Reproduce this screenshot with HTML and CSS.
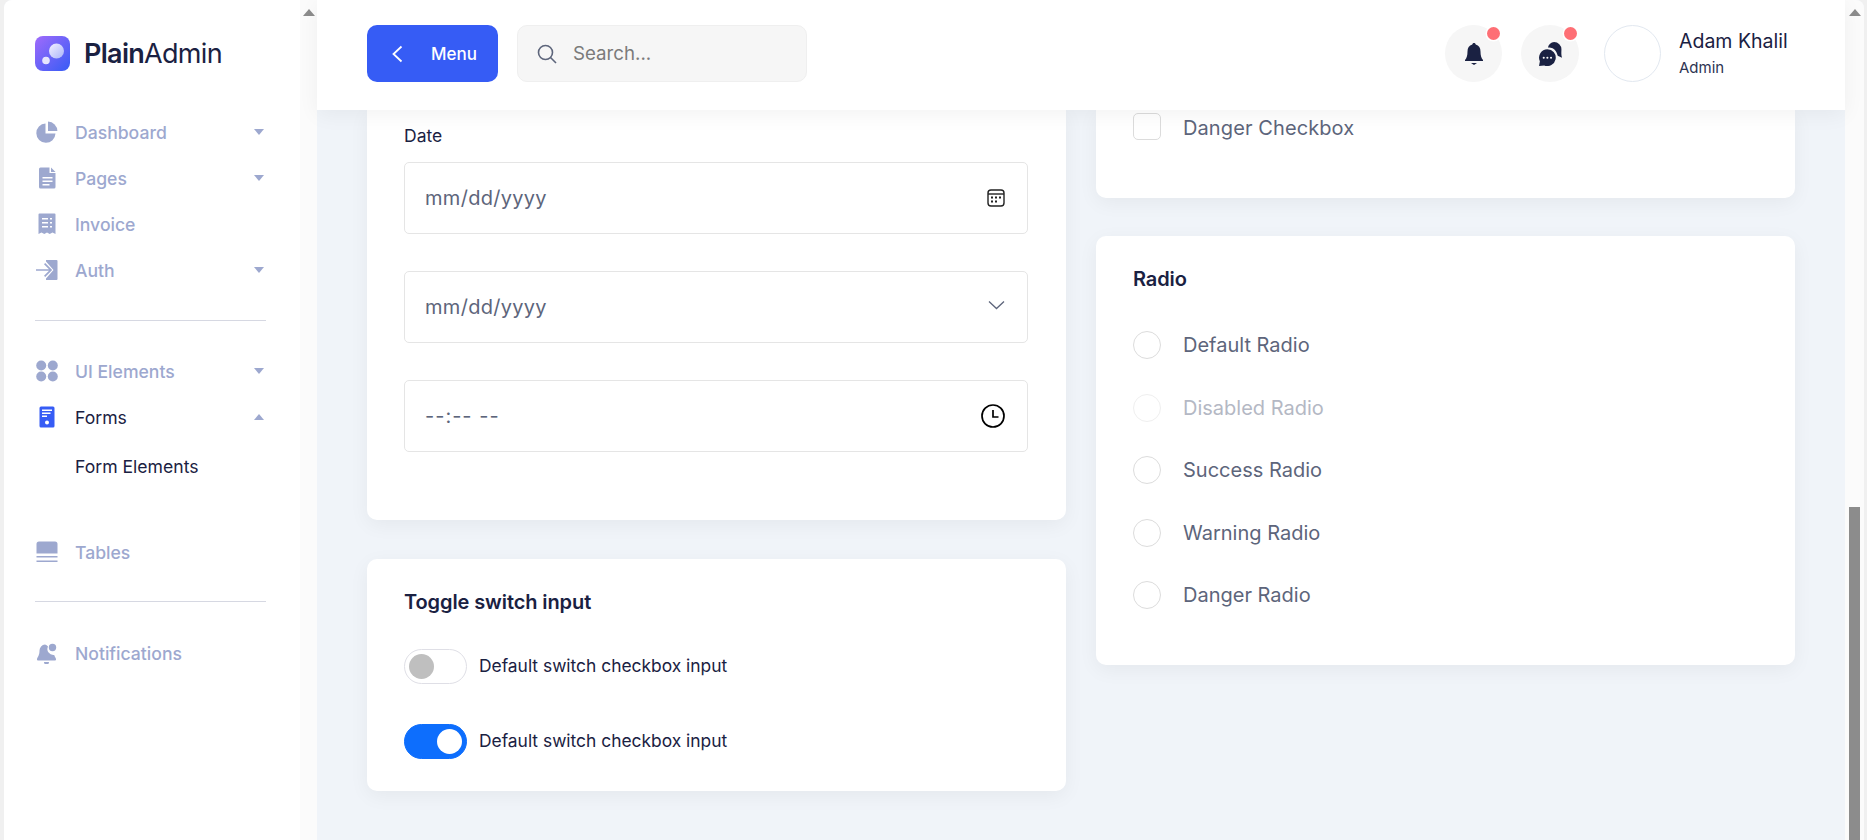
FILE: index.html
```html
<!DOCTYPE html>
<html lang="en">
<head>
<meta charset="UTF-8">
<title>Form Elements | PlainAdmin</title>
<link rel="stylesheet" href="styles.css">
</head>
<body>
<div class="window">
    <aside class="sidebar">
        <div class="side-body">
            <div class="brand">
                <svg class="brand-icon" viewBox="0 0 35 35">
                    <defs>
                        <linearGradient id="brandGrad" x1="0" y1="0" x2="1" y2="1">
                            <stop offset="0" stop-color="#a06bfb"/>
                            <stop offset="1" stop-color="#365cf5"/>
                        </linearGradient>
                        <linearGradient id="ballGrad" x1="0" y1="0" x2="1" y2="1">
                            <stop offset="0" stop-color="#f4f1ff"/>
                            <stop offset="1" stop-color="#a9b4fa"/>
                        </linearGradient>
                    </defs>
                    <rect width="35" height="35" rx="8" fill="url(#brandGrad)"/>
                    <circle cx="21.5" cy="15" r="7.5" fill="url(#ballGrad)"/>
                    <circle cx="11" cy="24.5" r="3.8" fill="#e6e4fd"/>
                </svg>
                <span class="brand-name"><b>Plain</b>Admin</span>
            </div>

            <ul class="nav">
                <li class="nav-item">
                    <svg class="nav-icon" viewBox="0 0 22 22"><path d="M9.5 2.6v10h10a9.6 9.6 0 1 1-10-10z"/><path d="M12 0.6a9.6 9.6 0 0 1 9.4 9.5H12z"/></svg>
                    <span>Dashboard</span><i class="caret"></i>
                </li>
                <li class="nav-item">
                    <svg class="nav-icon" viewBox="0 0 22 22"><path fill-rule="evenodd" d="M4.5 0.5h9v5.5h6v14a1.5 1.5 0 0 1-1.500 1.500H4.500a1.500 1.500 0 0 1-1.500-1.500V2a1.500 1.500 0 0 1 1.500-1.500zM6.500 10v1.500h10V10zM6.500 13.500V15h10v-1.500zM6.500 17v1.500h7V17z"/><path d="M15 0.500l4.500 4.500H15z"/></svg>
                    <span>Pages</span><i class="caret"></i>
                </li>
                <li class="nav-item">
                    <svg class="nav-icon" viewBox="0 0 22 22"><path fill-rule="evenodd" d="M3.500 0.500h15a1 1 0 0 1 1 1V21l-3-1.500-2.800 1.500-2.700-1.500-2.700 1.500-2.800-1.500-3 1.500V1.500a1 1 0 0 1 1-1zM6 5v1.500h6V5zM14 5v1.500h2V5zM6 9v1.500h6V9zM14 9v1.500h2V9zM6 13v1.500h6V13zM14 13v1.500h2V13z"/></svg>
                    <span>Invoice</span>
                </li>
                <li class="nav-item">
                    <svg class="nav-icon" viewBox="0 0 22 22"><path d="M10 1h10.500a1 1 0 0 1 1 1v18a1 1 0 0 1-1 1H10v-1.500l7.500-8.500L10 2.500z"/><path d="M0 10.200h13L8 5.200l1.200-1.200 7 7-7 7L8 16.800l5-5H0z"/></svg>
                    <span>Auth</span><i class="caret"></i>
                </li>
            </ul>

            <hr class="nav-rule">

            <ul class="nav">
                <li class="nav-item">
                    <svg class="nav-icon" viewBox="0 0 22 22"><circle cx="5.200" cy="5.500" r="5"/><circle cx="16.800" cy="5.500" r="5"/><circle cx="5.200" cy="16.500" r="5"/><circle cx="16.800" cy="16.500" r="5"/></svg>
                    <span>UI Elements</span><i class="caret"></i>
                </li>
                <li class="nav-item active">
                    <svg class="nav-icon" viewBox="0 0 22 22"><path fill-rule="evenodd" d="M5 0.500h12a1.500 1.500 0 0 1 1.500 1.500v18a1.500 1.500 0 0 1-1.500 1.500H5A1.500 1.500 0 0 1 3.500 20V2A1.500 1.500 0 0 1 5 0.500zM6 3.500v1.500h10V3.500zM6 6.500V8h8.500V6.500zM6 9.500V11h5V9.500zM11 14.500a2 2 0 1 0 0 4 2 2 0 0 0 0-4z"/></svg>
                    <span>Forms</span><i class="caret up"></i>
                </li>
                <li class="nav-sub">Form Elements</li>
                <li class="nav-item tables">
                    <svg class="nav-icon" viewBox="0 0 22 22"><path d="M3 0.500h16a2.500 2.500 0 0 1 2.500 2.500v9.500H0.500V3A2.500 2.500 0 0 1 3 0.500z"/><rect x="0.500" y="15" width="21" height="1.500"/><rect x="0.500" y="19.500" width="21" height="1.500"/></svg>
                    <span>Tables</span>
                </li>
            </ul>

            <hr class="nav-rule low">

            <ul class="nav">
                <li class="nav-item">
                    <svg class="nav-icon" viewBox="0 0 22 22"><path d="M9 2.500a6 6 0 0 0-5.500 6c0 5-2 6.500-2.500 8.500-.2 1 .5 1.500 1.500 1.500h16c1 0 1.700-.5 1.500-1.500-.3-1.300-1.200-2.300-1.800-4a6 6 0 0 1-6.200-8.500A6 6 0 0 0 9 2.500z"/><circle cx="16.500" cy="5.500" r="3.700"/><path d="M8 20h5a2.500 2.500 0 0 1-5 0z"/></svg>
                    <span>Notifications</span>
                </li>
            </ul>
        </div>
        <div class="side-track"><i class="track-arrow"></i></div>
    </aside>

    <main class="main">
        <header class="topbar">
            <div class="topbar-left">
                <button class="menu-btn">
                    <svg class="menu-chev" viewBox="0 0 12 18"><path d="M10.500 1.500L2.500 9l8 7.500"/></svg>
                    Menu
                </button>
                <div class="search">
                    <svg class="search-icon" viewBox="0 0 20 20"><circle cx="8.500" cy="8.500" r="7"/><path d="M13.500 13.500L19 19"/></svg>
                    <span>Search...</span>
                </div>
            </div>
            <div class="topbar-right">
                <div class="round-btn">
                    <svg class="round-icon bell" viewBox="0 0 20 24"><path d="M10 1c1 0 1.600.6 1.700 1.500C15 3.300 16.500 6 16.500 9.500c0 4 .8 6.500 2.500 8.500v1H1v-1c1.700-2 2.500-4.500 2.500-8.500C3.500 6 5 3.300 8.300 2.500 8.400 1.600 9 1 10 1z"/><path d="M7 21h6l-3 2z"/></svg>
                    <i class="badge"></i>
                </div>
                <div class="round-btn second">
                    <svg class="round-icon chat" viewBox="0 0 24 24">
                        <path d="M15.500 1a7 7 0 0 1 7 7c0 2.500-.4 5 .5 8l-3.500-1.500c-1 .5-.9-5-5.500-7.500-1.500-.8-3-1-4.500-.8A7 7 0 0 1 15.500 1z"/>
                        <path fill-rule="evenodd" d="M9 8a8 8 0 1 1-3 15.400L1 24l.8-4.500A8 8 0 0 1 9 8zM5.500 15a1 1 0 1 0 0 2 1 1 0 0 0 0-2zM9 15a1 1 0 1 0 0 2 1 1 0 0 0 0-2zM12.500 15a1 1 0 1 0 0 2 1 1 0 0 0 0-2z"/>
                    </svg>
                    <i class="badge"></i>
                </div>
                <div class="avatar"></div>
                <div class="user">
                    <div class="user-name">Adam Khalil</div>
                    <div class="user-role">Admin</div>
                </div>
            </div>
        </header>

        <div class="content">
            <div class="col">
                <section class="card date-card">
                    <label class="field-label">Date</label>
                    <div class="field">
                        <span>mm/dd/yyyy</span>
                        <svg class="cal-icon" viewBox="0 0 18 18"><rect x="1" y="1" width="16" height="16" rx="3"/><path d="M1 5h16"/><g class="dots"><rect x="4" y="7.500" width="2" height="2"/><rect x="8" y="7.500" width="2" height="2"/><rect x="12" y="7.500" width="2" height="2"/><rect x="4" y="11.500" width="2" height="2"/><rect x="8" y="11.500" width="2" height="2"/></g></svg>
                    </div>
                    <div class="field">
                        <span>mm/dd/yyyy</span>
                        <svg class="chev-icon" viewBox="0 0 17 10"><path d="M1 1.500l7.500 7 7.500-7"/></svg>
                    </div>
                    <div class="field">
                        <span class="time-text">--:-- --</span>
                        <svg class="clock-icon" viewBox="0 0 24 24"><circle cx="12" cy="12" r="11"/><path d="M12 6v7h5.500"/></svg>
                    </div>
                </section>

                <section class="card toggle-card">
                    <h2 class="card-title">Toggle switch input</h2>
                    <div class="switch-row">
                        <i class="switch"></i>
                        <span>Default switch checkbox input</span>
                    </div>
                    <div class="switch-row">
                        <i class="switch on"></i>
                        <span>Default switch checkbox input</span>
                    </div>
                </section>
            </div>

            <div class="col">
                <section class="card check-card">
                    <div class="check-row">
                        <i class="checkbox"></i>
                        <span>Danger Checkbox</span>
                    </div>
                </section>

                <section class="card radio-card">
                    <h2 class="card-title">Radio</h2>
                    <div class="radio-row"><i class="radio"></i><span>Default Radio</span></div>
                    <div class="radio-row disabled"><i class="radio"></i><span>Disabled Radio</span></div>
                    <div class="radio-row"><i class="radio"></i><span>Success Radio</span></div>
                    <div class="radio-row"><i class="radio"></i><span>Warning Radio</span></div>
                    <div class="radio-row"><i class="radio"></i><span>Danger Radio</span></div>
                </section>
            </div>
        </div>
    </main>

    <div class="page-track">
        <i class="track-arrow"></i>
        <div class="page-thumb"></div>
    </div>
</div>
</body>
</html>
```
FILE: styles.css
```css
* {
    box-sizing: border-box;
    margin: 0;
    padding: 0;
}

html, body {
    height: 100%;
    overflow: hidden;
}

body {
    font-family: Inter, "Noto Sans", sans-serif;
    background: #f0f0f0;
    color: #1a2142;
    padding: 0 3px 0 4px;
}

.window {
    display: flex;
    height: 840px;
    background: #f0f4f9;
    border-radius: 8px 8px 0 0;
    overflow: hidden;
}

/* sidebar */
.sidebar {
    display: flex;
    width: 313px;
    flex-shrink: 0;
    background: #fff;
}

.side-body {
    width: 296px;
    padding: 36px 0 0 31px;
}

.side-track {
    width: 17px;
    background: #fbfbfb;
    padding-top: 9px;
    display: flex;
    justify-content: center;
}

.track-arrow {
    display: block;
    width: 0;
    height: 0;
    border-left: 6.5px solid transparent;
    border-right: 6.5px solid transparent;
    border-bottom: 7px solid #8c8c8c;
}

.brand {
    display: flex;
    align-items: center;
    gap: 14px;
    height: 35px;
    margin-bottom: 38px;
}

.brand-icon {
    width: 35px;
    height: 35px;
}

.brand-name {
    font-size: 27px;
    letter-spacing: -0.7px;
    color: #1a2142;
    font-weight: 400;
}

.brand-name b {
    font-weight: 600;
}

.nav {
    list-style: none;
}

.nav-item {
    display: flex;
    align-items: center;
    height: 46px;
    font-size: 17.600px;
    font-weight: 500;
    color: #9da8cf;
    position: relative;
}

.nav-item.active {
    color: #1a2142;
    font-weight: 400;
}

.nav-item.tables {
    margin-top: 37px;
}

.nav-icon {
    width: 22px;
    height: 22px;
    margin-left: 1px;
    margin-right: 17px;
    fill: #9da8cf;
    flex-shrink: 0;
}

.active .nav-icon {
    fill: #365cf5;
}

.caret {
    position: absolute;
    left: 219px;
    top: 20px;
    width: 0;
    height: 0;
    border-left: 5.500px solid transparent;
    border-right: 5.500px solid transparent;
    border-top: 6px solid #9da8cf;
}

.caret.up {
    border-top: 0;
    border-bottom: 6px solid #9da8cf;
}

.nav-sub {
    height: 52px;
    padding-left: 40px;
    display: flex;
    align-items: center;
    font-size: 17.600px;
    font-weight: 400;
    color: #1a2142;
}

.nav-rule {
    width: 231px;
    border: 0;
    border-top: 1px solid #d6d8e2;
    margin: 27px 0 27px;
}

.nav-rule.low {
    margin: 26px 0 28px;
}

/* main */
.main {
    flex: 1;
    min-width: 0;
    display: flex;
    flex-direction: column;
}

.topbar {
    height: 110px;
    flex-shrink: 0;
    background: #fff;
    display: flex;
    align-items: center;
    justify-content: space-between;
    padding: 0 57px 3px 50px;
    box-shadow: 0 5px 20px rgba(0, 0, 0, 0.05);
    position: relative;
    z-index: 2;
}

.topbar-left, .topbar-right {
    display: flex;
    align-items: center;
}

.menu-btn {
    width: 131px;
    height: 57px;
    border: 0;
    border-radius: 10px;
    background: #365cf5;
    color: #fff;
    font-family: inherit;
    font-size: 17px;
    font-weight: 500;
    display: flex;
    align-items: center;
    padding-left: 24px;
    gap: 28px;
}

.menu-chev {
    width: 12px;
    height: 18px;
    fill: none;
    stroke: #fff;
    stroke-width: 1.800;
}

.search {
    width: 290px;
    height: 57px;
    margin-left: 19px;
    background: #f6f6f6;
    border: 1px solid #efefef;
    border-radius: 10px;
    display: flex;
    align-items: center;
    padding-left: 19px;
    gap: 16px;
    font-size: 18.700px;
    color: #7b7b7b;
}

.search-icon {
    width: 20px;
    height: 20px;
    fill: none;
    stroke: #5d657b;
    stroke-width: 1.600;
}

.round-btn {
    width: 57px;
    height: 57px;
    border-radius: 50%;
    background: #f6f6f6;
    position: relative;
    display: flex;
    align-items: center;
    justify-content: center;
}

.round-btn.second {
    width: 58px;
    margin-left: 19px;
}

.round-icon {
    fill: #1a2142;
}

.bell {
    width: 20px;
    height: 24px;
}

.chat {
    width: 25px;
    height: 25px;
}

.badge {
    position: absolute;
    top: 2px;
    right: 2px;
    width: 13px;
    height: 13px;
    border-radius: 50%;
    background: #fe6f75;
    box-shadow: 0 0 0 1.500px #fff;
}

.avatar {
    width: 57px;
    height: 57px;
    margin-left: 25px;
    border-radius: 50%;
    background: #fff;
    border: 1px solid #e2e8f0;
}

.user {
    margin-left: 18px;
    width: 109px;
}

.user-name {
    font-size: 19.500px;
    font-weight: 400;
    line-height: 28px;
    white-space: nowrap;
    margin-top: -3px;
}

.user-role {
    font-size: 15px;
    line-height: 20px;
    margin-top: 3px;
    color: #2d3452;
}

/* content */
.content {
    flex: 1;
    display: flex;
    gap: 30px;
    padding: 0 50px;
    min-height: 0;
}

.col {
    width: 699px;
    flex-shrink: 0;
}

.card {
    background: #fff;
    border-radius: 10px;
    padding: 0 37px;
    box-shadow: 0 5px 20px rgba(0, 0, 0, 0.05);
}

.date-card {
    border-radius: 0 0 10px 10px;
    height: 410px;
    padding-top: 16px;
}

.field-label {
    display: block;
    font-size: 17.500px;
    font-weight: 400;
    line-height: 20px;
    margin-bottom: 16px;
}

.field {
    width: 624px;
    height: 72px;
    border: 1.500px solid #e5e5e5;
    border-radius: 5px;
    display: flex;
    align-items: center;
    justify-content: space-between;
    padding: 0 22px 0 20px;
    margin-bottom: 37px;
    font-size: 20px;
    letter-spacing: 0.3px;
    color: #5d657b;
}

.time-text {
    letter-spacing: 1px;
}

.cal-icon {
    width: 18px;
    height: 18px;
    fill: none;
    stroke: #222;
    stroke-width: 1.400;
}

.cal-icon .dots {
    fill: #222;
    stroke: none;
}

.chev-icon {
    width: 17px;
    height: 10px;
    fill: none;
    stroke: #5d657b;
    stroke-width: 1.300;
    margin-top: -5px;
}

.clock-icon {
    width: 24px;
    height: 24px;
    fill: none;
    stroke: #000;
    stroke-width: 1.700;
}

.toggle-card {
    margin-top: 39px;
    height: 232px;
    padding-top: 31px;
}

.card-title {
    font-size: 20px;
    font-weight: 600;
    letter-spacing: -0.1px;
    line-height: 24px;
}

.switch-row {
    display: flex;
    align-items: center;
    gap: 12px;
    height: 35px;
    font-size: 17.400px;
    font-weight: 400;
    margin-top: 40px;
}

.switch-row:nth-of-type(1) {
    margin-top: 35px;
}

.switch-row span {
    margin-bottom: 2px;
}

.switch {
    display: block;
    position: relative;
    width: 63px;
    height: 35px;
    border: 1px solid #dfdfe6;
    border-radius: 18px;
    background: #fff;
}

.switch::after {
    content: "";
    position: absolute;
    top: 4px;
    left: 4px;
    width: 25px;
    height: 25px;
    border-radius: 50%;
    background: #bfbfbf;
}

.switch.on {
    background: #0d6efd;
    border-color: #0d6efd;
}

.switch.on::after {
    left: 32px;
    background: #fff;
}

.check-card {
    border-radius: 0 0 10px 10px;
    height: 88px;
    padding-top: 2px;
}

.check-row {
    display: flex;
    align-items: center;
    gap: 22px;
    font-size: 20px;
    letter-spacing: 0.1px;
    color: #5d657b;
    height: 28px;
}

.check-row span {
    margin-top: 3px;
}

.checkbox {
    display: block;
    width: 28px;
    height: 27px;
    border: 1px solid #dcdcdc;
    border-radius: 5px;
    background: #fff;
}

.radio-card {
    margin-top: 38px;
    height: 429px;
    padding-top: 31px;
}

.radio-row {
    display: flex;
    align-items: center;
    gap: 22px;
    height: 28px;
    margin-top: 34.500px;
    font-size: 20px;
    color: #5d657b;
}

.card-title + .radio-row {
    margin-top: 40px;
}

.radio {
    display: block;
    width: 28px;
    height: 28px;
    border: 1px solid #dcdcdc;
    border-radius: 50%;
    background: #fff;
}

.radio-row.disabled {
    color: #b4b8c4;
}

.radio-row.disabled .radio {
    border-color: #efefef;
}

/* page scrollbar */
.page-track {
    width: 19px;
    flex-shrink: 0;
    background: #fbfbfb;
    padding-top: 9px;
    position: relative;
    display: flex;
    flex-direction: column;
    align-items: center;
}

.page-thumb {
    position: absolute;
    left: 4px;
    top: 507px;
    bottom: 0;
    width: 11px;
    background: #8c8c8c;
}
```
